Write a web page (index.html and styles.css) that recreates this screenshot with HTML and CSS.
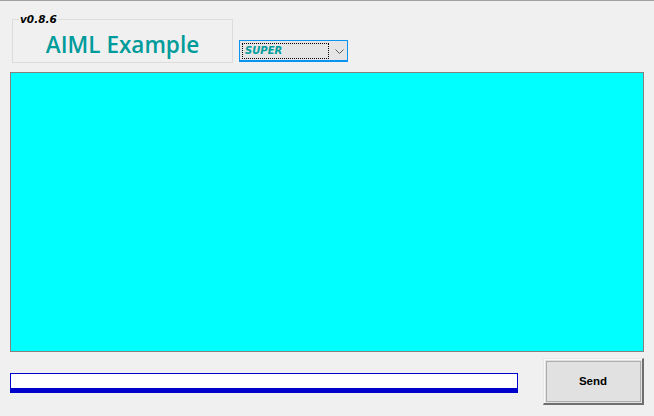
FILE: index.html
```html
<!DOCTYPE html>
<html>
<head>
<meta charset="utf-8">
<link rel="stylesheet" href="styles.css">
</head>
<body>
<div class="app">
  <div class="top">
    <div class="group">
      <span class="legend">v0.8.6</span>
      <div class="title">AIML Example</div>
    </div>
    <div class="combo">
      <div class="combo-field"><span class="combo-text">SUPER</span></div>
      <svg class="chev" width="9" height="5" viewBox="0 0 9 5"><polyline points="0.5,0.5 4.5,4.5 8.5,0.5" fill="none" stroke="#5a5a5a" stroke-width="1"/></svg>
    </div>
  </div>
  <div class="panel"></div>
  <div class="bottom">
    <div class="input"></div>
    <button class="send">Send</button>
  </div>
</div>
</body>
</html>
```
FILE: styles.css
```css
html, body {
  margin: 0;
  padding: 0;
  background: #f0f0f0;
  width: 654px;
  height: 416px;
  overflow: hidden;
}
.app {
  border-top: 1px solid #a0a0a0;
  height: 415px;
  display: flex;
  flex-direction: column;
}
.top {
  display: flex;
  align-items: flex-start;
  padding-left: 12px;
  margin-top: 18px;
}
.group {
  position: relative;
  width: 219px;
  height: 42px;
  border: 1px solid #dcdcdc;
  display: flex;
  justify-content: center;
}
.legend {
  position: absolute;
  top: -7px;
  left: 6px;
  padding: 0 1px;
  background: #f0f0f0;
  font-family: "DejaVu Sans", sans-serif;
  font-weight: bold;
  font-style: italic;
  font-size: 10.5px;
  line-height: 12px;
  color: #000;
}
.title {
  font-family: "Open Sans", sans-serif;
  font-weight: 600;
  font-size: 22.5px;
  line-height: 30px;
  margin-top: 10px;
  color: #009b9b;
}
.combo {
  margin-left: 6px;
  margin-top: 21px;
  width: 105px;
  height: 19px;
  border: 1px solid #0a94f0;
  border-bottom-width: 2px;
  background: #e5e5e5;
  display: flex;
  align-items: center;
  padding-left: 2px;
  box-sizing: content-box;
}
.combo-field {
  width: 83px;
  height: 14px;
  border: 1px dotted #000;
  display: flex;
  align-items: center;
  padding-left: 2px;
}
.combo-text {
  font-family: "DejaVu Sans", sans-serif;
  font-weight: bold;
  font-style: italic;
  font-size: 10px;
  color: #009b9b;
}
.chev {
  margin-left: 6px;
  margin-top: 1px;
}
.panel {
  margin-top: 9px;
  margin-left: 10px;
  width: 632px;
  height: 278px;
  background: #00ffff;
  border: 1px solid #828282;
}
.bottom {
  display: flex;
  align-items: flex-start;
  padding-left: 10px;
}
.input {
  margin-top: 21px;
  width: 506px;
  height: 14px;
  background: #fff;
  border: 1px solid #0000cc;
  border-bottom: 5px solid #0000cc;
}
.send {
  margin-left: 25px;
  margin-top: 6px;
  width: 101px;
  height: 47px;
  padding: 0;
  background: #e1e1e1;
  border-style: solid;
  border-width: 1px 2px 2px 1px;
  border-color: #e8e8e8 #6f6f6f #6f6f6f #e8e8e8;
  box-shadow: inset 1px 1px 0 #fafafa, inset 2px 2px 0 #e1e1e1, inset -1px -1px 0 #e1e1e1, inset 3px 3px 0 #adadad, inset -2px -2px 0 #adadad;
  font-family: "Liberation Sans", sans-serif;
  font-weight: bold;
  font-size: 11.5px;
  color: #000;
}
```
